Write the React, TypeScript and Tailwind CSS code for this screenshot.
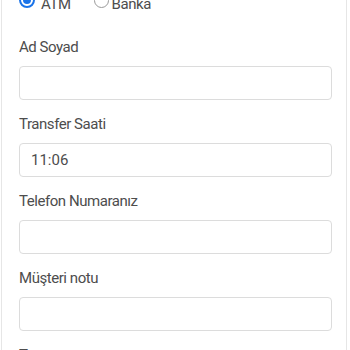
import React from 'react';

const fields = [
  { label: 'Ad Soyad', value: '' },
  { label: 'Transfer Saati', value: '11:06' },
  { label: 'Telefon Numaranız', value: '' },
  { label: 'Müşteri notu', value: '' },
];

export default function App() {
  return (
    <div className="h-[350px] w-[350px] overflow-hidden bg-white font-['Roboto',sans-serif] tracking-[-0.45px]">
      <div className="ml-[1px] w-[346px] h-[400px] border-x border-[#e6e6e6] pl-[17px] pr-[14px] -mt-[6px]">
        {/* payment type */}
        <div className="flex items-center h-5">
          <label className="flex items-center gap-[6px] text-[15px] text-[#4d4d4d]">
            <span className="w-4 h-4 -translate-y-1 rounded-full border-2 border-[#1a73e8] flex items-center justify-center">
              <span className="w-2 h-2 rounded-full bg-[#1a73e8]" />
            </span>
            ATM
          </label>
          <label className="ml-[23px] flex items-center gap-[3px] text-[15px] text-[#4d4d4d]">
            <span className="w-[15px] h-[15px] -translate-y-1 rounded-full border border-[#999]" />
            Banka
          </label>
        </div>

        <div className="mt-[23px] flex flex-col gap-[14px]">
          {fields.map((f) => (
            <div key={f.label} className="flex flex-col gap-[9px]">
              <div className="h-5 leading-5 text-[15px] text-[#4d4d4d]">{f.label}</div>
              <div className="h-[34px] rounded-[4px] border border-[#dcdcdc] px-[11px] flex items-center text-[15px] text-[#4d4d4d] tracking-normal">
                {f.value}
              </div>
            </div>
          ))}
          <div className="h-5 leading-5 text-[15px] text-[#4d4d4d]">Tutar</div>
        </div>
      </div>
    </div>
  );
}
